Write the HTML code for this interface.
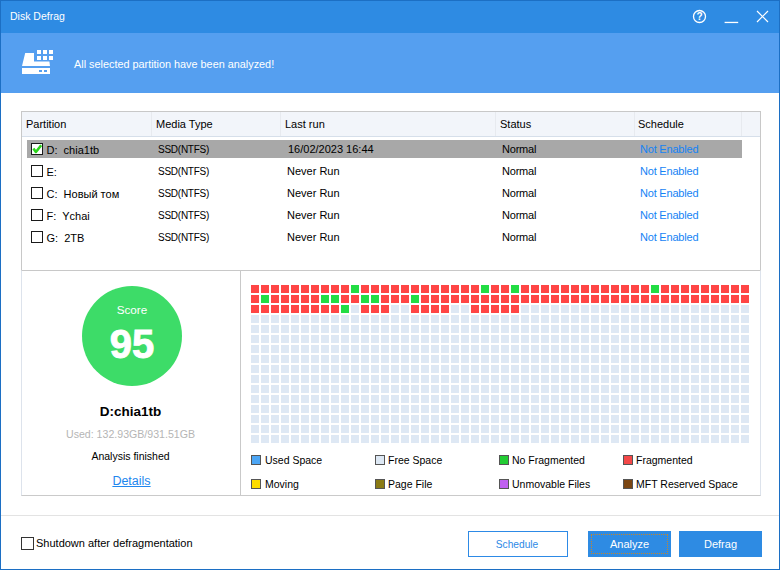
<!DOCTYPE html>
<html><head><meta charset="utf-8"><style>
html,body{margin:0;padding:0;}
body{width:780px;height:570px;position:relative;overflow:hidden;background:#fff;font-family:"Liberation Sans",sans-serif;color:#000;}
.a{position:absolute;white-space:nowrap;}
#win{position:absolute;left:0;top:0;width:778px;height:568px;border:1px solid #1c6fc4;}
#title{position:absolute;left:1px;top:1px;width:778px;height:32px;background:#2e8be3;}
#hdr{position:absolute;left:1px;top:33px;width:778px;height:60px;background:#559ff0;}
.wt{color:#fff;}
.t11{font-size:11px;}
#tbl{position:absolute;left:21px;top:111px;width:738px;height:158px;border:1px solid #c8c8c8;}
#thead{position:absolute;left:22px;top:112px;width:738px;height:24px;background:#f2f5fa;border-bottom:1px solid #d6dfea;}
.sep{position:absolute;top:112px;width:1px;height:24px;background:#e7eaef;}
.sel{position:absolute;left:27px;top:140px;width:715px;height:18px;background:#a8a8a8;}
.cb{position:absolute;width:10px;height:10px;border:1px solid #1a1a1a;background:#fff;}
.lnk{color:#1583f5;}
#panel{position:absolute;left:21px;top:270px;width:738px;height:224px;border:1px solid #dde3ec;border-top-color:#c8c8c8;border-bottom-color:#cacaca;}
#pdiv{position:absolute;left:240px;top:270px;width:1px;height:225px;background:#c9c9c9;}
#circ{position:absolute;left:82px;top:286px;width:100px;height:100px;border-radius:50%;background:#3ddc68;}
i{position:absolute;width:8px;height:8px;display:block;}
i.r{background:#ff4545;}
i.g{background:#22dd44;}
i.f{background:#dee8f4;}
.lg{position:absolute;width:8px;height:8px;border:1px solid #555;}
#bsep{position:absolute;left:1px;top:515px;width:778px;height:1px;background:#e3e3e3;}
.btn{position:absolute;top:531px;height:26px;box-sizing:border-box;text-align:center;font-size:11px;line-height:26px;}

</style></head><body>
<div id="win"></div>
<div id="title"></div>
<div class="a wt" style="left:10px;top:10px;font-size:10.5px;">Disk Defrag</div>
<svg class="a" style="left:690px;top:7px" width="80" height="20" viewBox="0 0 80 20">
  <circle cx="9.5" cy="9.5" r="6" fill="none" stroke="#fff" stroke-width="1.3"/>
  <text x="9.6" y="13.3" font-family="Liberation Sans" font-size="10" font-weight="bold" fill="#fff" text-anchor="middle">?</text>
  <rect x="34.6" y="14.8" width="13.6" height="1.3" fill="#fff"/>
  <path d="M67 4 L78 15 M78 4 L67 15" stroke="#fff" stroke-width="1.2"/>
</svg>
<div id="hdr"></div>
<svg class="a" style="left:20px;top:48px" width="36" height="30" viewBox="20 48 36 30">
  <path d="M22 66 L25.2 53 L34 53 L34 61.5 L49.4 61.5 L50 66 Z" fill="#fff"/>
  <rect x="22" y="68" width="28" height="6" fill="#fff"/>
  <rect x="39" y="70" width="3" height="2" fill="#559ff0"/>
  <rect x="44" y="70" width="3" height="2" fill="#559ff0"/>
  <rect x="37" y="50" width="4" height="4" fill="#fff"/>
  <rect x="43" y="50" width="4" height="4" fill="#fff"/>
  <rect x="49" y="50" width="4" height="4" fill="#fff"/>
  <rect x="37" y="56" width="4" height="4" fill="#fff"/>
  <rect x="43" y="56" width="4" height="4" fill="#fff"/>
  <rect x="49" y="56" width="4" height="4" fill="#fff"/>
</svg>
<div class="a wt" style="left:74px;top:58px;font-size:10.85px;">All selected partition have been analyzed!</div>

<div id="tbl"></div>
<div id="thead"></div>
<div class="sep" style="left:151px"></div>
<div class="sep" style="left:280px"></div>
<div class="sep" style="left:495px"></div>
<div class="sep" style="left:634px"></div>
<div class="sep" style="left:741px"></div>
<div class="a t11" style="left:26px;top:118px;">Partition</div>
<div class="a t11" style="left:156px;top:118px;">Media Type</div>
<div class="a t11" style="left:285px;top:118px;">Last run</div>
<div class="a t11" style="left:500px;top:118px;">Status</div>
<div class="a t11" style="left:638px;top:118px;">Schedule</div>

<div class="sel"></div>
<div class="cb" style="left:31px;top:143px;"></div>
<svg class="a" style="left:31px;top:143px" width="12" height="12" viewBox="0 0 12 12"><path d="M2.4 5.6 L4.9 9 L10.2 2.2" fill="none" stroke="#2cd41c" stroke-width="2.6" stroke-linejoin="round"/></svg>
<div class="a t11" style="left:46.5px;top:144px;">D:&nbsp; chia1tb</div>
<div class="a t11" style="left:158px;top:143px;"><span style="font-size:10px;letter-spacing:-0.25px">SSD(NTFS)</span></div>
<div class="a t11" style="left:288px;top:143px;">16/02/2023 16:44</div>
<div class="a t11" style="left:502px;top:143px;letter-spacing:-0.2px;">Normal</div>
<div class="a t11 lnk" style="left:640px;top:143px;letter-spacing:-0.2px;">Not Enabled</div>

<div class="cb" style="left:31px;top:165px;"></div>
<div class="a t11" style="left:46.5px;top:166px;">E:</div>
<div class="a t11" style="left:158px;top:165px;"><span style="font-size:10px;letter-spacing:-0.25px">SSD(NTFS)</span></div>
<div class="a t11" style="left:287px;top:165px;">Never Run</div>
<div class="a t11" style="left:502px;top:165px;letter-spacing:-0.2px;">Normal</div>
<div class="a t11 lnk" style="left:640px;top:165px;letter-spacing:-0.2px;">Not Enabled</div>

<div class="cb" style="left:31px;top:187px;"></div>
<div class="a t11" style="left:46.5px;top:188px;">C:&nbsp; Новый том</div>
<div class="a t11" style="left:158px;top:187px;"><span style="font-size:10px;letter-spacing:-0.25px">SSD(NTFS)</span></div>
<div class="a t11" style="left:287px;top:187px;">Never Run</div>
<div class="a t11" style="left:502px;top:187px;letter-spacing:-0.2px;">Normal</div>
<div class="a t11 lnk" style="left:640px;top:187px;letter-spacing:-0.2px;">Not Enabled</div>

<div class="cb" style="left:31px;top:209px;"></div>
<div class="a t11" style="left:46.5px;top:210px;">F:&nbsp; Ychai</div>
<div class="a t11" style="left:158px;top:209px;"><span style="font-size:10px;letter-spacing:-0.25px">SSD(NTFS)</span></div>
<div class="a t11" style="left:287px;top:209px;">Never Run</div>
<div class="a t11" style="left:502px;top:209px;letter-spacing:-0.2px;">Normal</div>
<div class="a t11 lnk" style="left:640px;top:209px;letter-spacing:-0.2px;">Not Enabled</div>

<div class="cb" style="left:31px;top:231px;"></div>
<div class="a t11" style="left:46.5px;top:232px;">G:&nbsp; 2TB</div>
<div class="a t11" style="left:158px;top:231px;"><span style="font-size:10px;letter-spacing:-0.25px">SSD(NTFS)</span></div>
<div class="a t11" style="left:287px;top:231px;">Never Run</div>
<div class="a t11" style="left:502px;top:231px;letter-spacing:-0.2px;">Normal</div>
<div class="a t11 lnk" style="left:640px;top:231px;letter-spacing:-0.2px;">Not Enabled</div>

<div id="panel"></div>
<div id="pdiv"></div>
<div id="circ"></div>
<div class="a wt" style="left:82px;width:100px;text-align:center;top:303px;font-size:11.7px;">Score</div>
<div class="a wt" style="left:82px;width:100px;text-align:center;top:322px;font-size:40px;font-weight:bold;-webkit-text-stroke:0.9px #fff;">95</div>
<div class="a" style="left:21px;width:219px;text-align:center;top:404px;font-size:13.5px;font-weight:bold;">D:chia1tb</div>
<div class="a" style="left:21px;width:219px;text-align:center;top:428px;font-size:10.6px;color:#b5b5b5;">Used: 132.93GB/931.51GB</div>
<div class="a" style="left:21px;width:219px;text-align:center;top:450px;font-size:10.5px;">Analysis finished</div>
<div class="a" style="left:22px;width:219px;text-align:center;top:474px;font-size:12.5px;text-decoration:underline;color:#2186ee;">Details</div>

<i class="r" style="left:251px;top:285px"></i><i class="r" style="left:261px;top:285px"></i><i class="r" style="left:271px;top:285px"></i><i class="r" style="left:281px;top:285px"></i><i class="r" style="left:291px;top:285px"></i><i class="r" style="left:301px;top:285px"></i><i class="r" style="left:311px;top:285px"></i><i class="r" style="left:321px;top:285px"></i><i class="r" style="left:331px;top:285px"></i><i class="r" style="left:341px;top:285px"></i><i class="g" style="left:351px;top:285px"></i><i class="r" style="left:361px;top:285px"></i><i class="r" style="left:371px;top:285px"></i><i class="r" style="left:381px;top:285px"></i><i class="r" style="left:391px;top:285px"></i><i class="r" style="left:401px;top:285px"></i><i class="r" style="left:411px;top:285px"></i><i class="r" style="left:421px;top:285px"></i><i class="r" style="left:431px;top:285px"></i><i class="r" style="left:441px;top:285px"></i><i class="r" style="left:451px;top:285px"></i><i class="r" style="left:461px;top:285px"></i><i class="r" style="left:471px;top:285px"></i><i class="g" style="left:481px;top:285px"></i><i class="r" style="left:491px;top:285px"></i><i class="r" style="left:501px;top:285px"></i><i class="g" style="left:511px;top:285px"></i><i class="r" style="left:521px;top:285px"></i><i class="r" style="left:531px;top:285px"></i><i class="r" style="left:541px;top:285px"></i><i class="r" style="left:551px;top:285px"></i><i class="r" style="left:561px;top:285px"></i><i class="r" style="left:571px;top:285px"></i><i class="r" style="left:581px;top:285px"></i><i class="r" style="left:591px;top:285px"></i><i class="r" style="left:601px;top:285px"></i><i class="r" style="left:611px;top:285px"></i><i class="r" style="left:621px;top:285px"></i><i class="r" style="left:631px;top:285px"></i><i class="r" style="left:641px;top:285px"></i><i class="g" style="left:651px;top:285px"></i><i class="r" style="left:661px;top:285px"></i><i class="r" style="left:671px;top:285px"></i><i class="r" style="left:681px;top:285px"></i><i class="r" style="left:691px;top:285px"></i><i class="r" style="left:701px;top:285px"></i><i class="r" style="left:711px;top:285px"></i><i class="r" style="left:721px;top:285px"></i><i class="r" style="left:731px;top:285px"></i><i class="r" style="left:741px;top:285px"></i><i class="r" style="left:251px;top:295px"></i><i class="g" style="left:261px;top:295px"></i><i class="r" style="left:271px;top:295px"></i><i class="r" style="left:281px;top:295px"></i><i class="r" style="left:291px;top:295px"></i><i class="r" style="left:301px;top:295px"></i><i class="r" style="left:311px;top:295px"></i><i class="g" style="left:321px;top:295px"></i><i class="g" style="left:331px;top:295px"></i><i class="r" style="left:341px;top:295px"></i><i class="r" style="left:351px;top:295px"></i><i class="g" style="left:361px;top:295px"></i><i class="g" style="left:371px;top:295px"></i><i class="r" style="left:381px;top:295px"></i><i class="r" style="left:391px;top:295px"></i><i class="r" style="left:401px;top:295px"></i><i class="g" style="left:411px;top:295px"></i><i class="r" style="left:421px;top:295px"></i><i class="r" style="left:431px;top:295px"></i><i class="r" style="left:441px;top:295px"></i><i class="r" style="left:451px;top:295px"></i><i class="r" style="left:461px;top:295px"></i><i class="r" style="left:471px;top:295px"></i><i class="r" style="left:481px;top:295px"></i><i class="r" style="left:491px;top:295px"></i><i class="r" style="left:501px;top:295px"></i><i class="r" style="left:511px;top:295px"></i><i class="r" style="left:521px;top:295px"></i><i class="r" style="left:531px;top:295px"></i><i class="r" style="left:541px;top:295px"></i><i class="r" style="left:551px;top:295px"></i><i class="r" style="left:561px;top:295px"></i><i class="r" style="left:571px;top:295px"></i><i class="r" style="left:581px;top:295px"></i><i class="r" style="left:591px;top:295px"></i><i class="r" style="left:601px;top:295px"></i><i class="r" style="left:611px;top:295px"></i><i class="r" style="left:621px;top:295px"></i><i class="r" style="left:631px;top:295px"></i><i class="r" style="left:641px;top:295px"></i><i class="r" style="left:651px;top:295px"></i><i class="r" style="left:661px;top:295px"></i><i class="r" style="left:671px;top:295px"></i><i class="r" style="left:681px;top:295px"></i><i class="r" style="left:691px;top:295px"></i><i class="r" style="left:701px;top:295px"></i><i class="r" style="left:711px;top:295px"></i><i class="r" style="left:721px;top:295px"></i><i class="r" style="left:731px;top:295px"></i><i class="r" style="left:741px;top:295px"></i><i class="r" style="left:251px;top:305px"></i><i class="r" style="left:261px;top:305px"></i><i class="r" style="left:271px;top:305px"></i><i class="r" style="left:281px;top:305px"></i><i class="r" style="left:291px;top:305px"></i><i class="r" style="left:301px;top:305px"></i><i class="r" style="left:311px;top:305px"></i><i class="r" style="left:321px;top:305px"></i><i class="r" style="left:331px;top:305px"></i><i class="g" style="left:341px;top:305px"></i><i class="f" style="left:351px;top:305px"></i><i class="r" style="left:361px;top:305px"></i><i class="r" style="left:371px;top:305px"></i><i class="r" style="left:381px;top:305px"></i><i class="f" style="left:391px;top:305px"></i><i class="f" style="left:401px;top:305px"></i><i class="r" style="left:411px;top:305px"></i><i class="r" style="left:421px;top:305px"></i><i class="r" style="left:431px;top:305px"></i><i class="r" style="left:441px;top:305px"></i><i class="f" style="left:451px;top:305px"></i><i class="f" style="left:461px;top:305px"></i><i class="r" style="left:471px;top:305px"></i><i class="r" style="left:481px;top:305px"></i><i class="r" style="left:491px;top:305px"></i><i class="r" style="left:501px;top:305px"></i><i class="r" style="left:511px;top:305px"></i><i class="f" style="left:521px;top:305px"></i><i class="f" style="left:531px;top:305px"></i><i class="f" style="left:541px;top:305px"></i><i class="f" style="left:551px;top:305px"></i><i class="f" style="left:561px;top:305px"></i><i class="f" style="left:571px;top:305px"></i><i class="f" style="left:581px;top:305px"></i><i class="f" style="left:591px;top:305px"></i><i class="f" style="left:601px;top:305px"></i><i class="f" style="left:611px;top:305px"></i><i class="f" style="left:621px;top:305px"></i><i class="f" style="left:631px;top:305px"></i><i class="f" style="left:641px;top:305px"></i><i class="f" style="left:651px;top:305px"></i><i class="f" style="left:661px;top:305px"></i><i class="f" style="left:671px;top:305px"></i><i class="f" style="left:681px;top:305px"></i><i class="f" style="left:691px;top:305px"></i><i class="f" style="left:701px;top:305px"></i><i class="f" style="left:711px;top:305px"></i><i class="f" style="left:721px;top:305px"></i><i class="f" style="left:731px;top:305px"></i><i class="f" style="left:741px;top:305px"></i><i class="f" style="left:251px;top:315px"></i><i class="f" style="left:261px;top:315px"></i><i class="f" style="left:271px;top:315px"></i><i class="f" style="left:281px;top:315px"></i><i class="f" style="left:291px;top:315px"></i><i class="f" style="left:301px;top:315px"></i><i class="f" style="left:311px;top:315px"></i><i class="f" style="left:321px;top:315px"></i><i class="f" style="left:331px;top:315px"></i><i class="f" style="left:341px;top:315px"></i><i class="f" style="left:351px;top:315px"></i><i class="f" style="left:361px;top:315px"></i><i class="f" style="left:371px;top:315px"></i><i class="f" style="left:381px;top:315px"></i><i class="f" style="left:391px;top:315px"></i><i class="f" style="left:401px;top:315px"></i><i class="f" style="left:411px;top:315px"></i><i class="f" style="left:421px;top:315px"></i><i class="f" style="left:431px;top:315px"></i><i class="f" style="left:441px;top:315px"></i><i class="f" style="left:451px;top:315px"></i><i class="f" style="left:461px;top:315px"></i><i class="f" style="left:471px;top:315px"></i><i class="f" style="left:481px;top:315px"></i><i class="f" style="left:491px;top:315px"></i><i class="f" style="left:501px;top:315px"></i><i class="f" style="left:511px;top:315px"></i><i class="f" style="left:521px;top:315px"></i><i class="f" style="left:531px;top:315px"></i><i class="f" style="left:541px;top:315px"></i><i class="f" style="left:551px;top:315px"></i><i class="f" style="left:561px;top:315px"></i><i class="f" style="left:571px;top:315px"></i><i class="f" style="left:581px;top:315px"></i><i class="f" style="left:591px;top:315px"></i><i class="f" style="left:601px;top:315px"></i><i class="f" style="left:611px;top:315px"></i><i class="f" style="left:621px;top:315px"></i><i class="f" style="left:631px;top:315px"></i><i class="f" style="left:641px;top:315px"></i><i class="f" style="left:651px;top:315px"></i><i class="f" style="left:661px;top:315px"></i><i class="f" style="left:671px;top:315px"></i><i class="f" style="left:681px;top:315px"></i><i class="f" style="left:691px;top:315px"></i><i class="f" style="left:701px;top:315px"></i><i class="f" style="left:711px;top:315px"></i><i class="f" style="left:721px;top:315px"></i><i class="f" style="left:731px;top:315px"></i><i class="f" style="left:741px;top:315px"></i><i class="f" style="left:251px;top:325px"></i><i class="f" style="left:261px;top:325px"></i><i class="f" style="left:271px;top:325px"></i><i class="f" style="left:281px;top:325px"></i><i class="f" style="left:291px;top:325px"></i><i class="f" style="left:301px;top:325px"></i><i class="f" style="left:311px;top:325px"></i><i class="f" style="left:321px;top:325px"></i><i class="f" style="left:331px;top:325px"></i><i class="f" style="left:341px;top:325px"></i><i class="f" style="left:351px;top:325px"></i><i class="f" style="left:361px;top:325px"></i><i class="f" style="left:371px;top:325px"></i><i class="f" style="left:381px;top:325px"></i><i class="f" style="left:391px;top:325px"></i><i class="f" style="left:401px;top:325px"></i><i class="f" style="left:411px;top:325px"></i><i class="f" style="left:421px;top:325px"></i><i class="f" style="left:431px;top:325px"></i><i class="f" style="left:441px;top:325px"></i><i class="f" style="left:451px;top:325px"></i><i class="f" style="left:461px;top:325px"></i><i class="f" style="left:471px;top:325px"></i><i class="f" style="left:481px;top:325px"></i><i class="f" style="left:491px;top:325px"></i><i class="f" style="left:501px;top:325px"></i><i class="f" style="left:511px;top:325px"></i><i class="f" style="left:521px;top:325px"></i><i class="f" style="left:531px;top:325px"></i><i class="f" style="left:541px;top:325px"></i><i class="f" style="left:551px;top:325px"></i><i class="f" style="left:561px;top:325px"></i><i class="f" style="left:571px;top:325px"></i><i class="f" style="left:581px;top:325px"></i><i class="f" style="left:591px;top:325px"></i><i class="f" style="left:601px;top:325px"></i><i class="f" style="left:611px;top:325px"></i><i class="f" style="left:621px;top:325px"></i><i class="f" style="left:631px;top:325px"></i><i class="f" style="left:641px;top:325px"></i><i class="f" style="left:651px;top:325px"></i><i class="f" style="left:661px;top:325px"></i><i class="f" style="left:671px;top:325px"></i><i class="f" style="left:681px;top:325px"></i><i class="f" style="left:691px;top:325px"></i><i class="f" style="left:701px;top:325px"></i><i class="f" style="left:711px;top:325px"></i><i class="f" style="left:721px;top:325px"></i><i class="f" style="left:731px;top:325px"></i><i class="f" style="left:741px;top:325px"></i><i class="f" style="left:251px;top:335px"></i><i class="f" style="left:261px;top:335px"></i><i class="f" style="left:271px;top:335px"></i><i class="f" style="left:281px;top:335px"></i><i class="f" style="left:291px;top:335px"></i><i class="f" style="left:301px;top:335px"></i><i class="f" style="left:311px;top:335px"></i><i class="f" style="left:321px;top:335px"></i><i class="f" style="left:331px;top:335px"></i><i class="f" style="left:341px;top:335px"></i><i class="f" style="left:351px;top:335px"></i><i class="f" style="left:361px;top:335px"></i><i class="f" style="left:371px;top:335px"></i><i class="f" style="left:381px;top:335px"></i><i class="f" style="left:391px;top:335px"></i><i class="f" style="left:401px;top:335px"></i><i class="f" style="left:411px;top:335px"></i><i class="f" style="left:421px;top:335px"></i><i class="f" style="left:431px;top:335px"></i><i class="f" style="left:441px;top:335px"></i><i class="f" style="left:451px;top:335px"></i><i class="f" style="left:461px;top:335px"></i><i class="f" style="left:471px;top:335px"></i><i class="f" style="left:481px;top:335px"></i><i class="f" style="left:491px;top:335px"></i><i class="f" style="left:501px;top:335px"></i><i class="f" style="left:511px;top:335px"></i><i class="f" style="left:521px;top:335px"></i><i class="f" style="left:531px;top:335px"></i><i class="f" style="left:541px;top:335px"></i><i class="f" style="left:551px;top:335px"></i><i class="f" style="left:561px;top:335px"></i><i class="f" style="left:571px;top:335px"></i><i class="f" style="left:581px;top:335px"></i><i class="f" style="left:591px;top:335px"></i><i class="f" style="left:601px;top:335px"></i><i class="f" style="left:611px;top:335px"></i><i class="f" style="left:621px;top:335px"></i><i class="f" style="left:631px;top:335px"></i><i class="f" style="left:641px;top:335px"></i><i class="f" style="left:651px;top:335px"></i><i class="f" style="left:661px;top:335px"></i><i class="f" style="left:671px;top:335px"></i><i class="f" style="left:681px;top:335px"></i><i class="f" style="left:691px;top:335px"></i><i class="f" style="left:701px;top:335px"></i><i class="f" style="left:711px;top:335px"></i><i class="f" style="left:721px;top:335px"></i><i class="f" style="left:731px;top:335px"></i><i class="f" style="left:741px;top:335px"></i><i class="f" style="left:251px;top:345px"></i><i class="f" style="left:261px;top:345px"></i><i class="f" style="left:271px;top:345px"></i><i class="f" style="left:281px;top:345px"></i><i class="f" style="left:291px;top:345px"></i><i class="f" style="left:301px;top:345px"></i><i class="f" style="left:311px;top:345px"></i><i class="f" style="left:321px;top:345px"></i><i class="f" style="left:331px;top:345px"></i><i class="f" style="left:341px;top:345px"></i><i class="f" style="left:351px;top:345px"></i><i class="f" style="left:361px;top:345px"></i><i class="f" style="left:371px;top:345px"></i><i class="f" style="left:381px;top:345px"></i><i class="f" style="left:391px;top:345px"></i><i class="f" style="left:401px;top:345px"></i><i class="f" style="left:411px;top:345px"></i><i class="f" style="left:421px;top:345px"></i><i class="f" style="left:431px;top:345px"></i><i class="f" style="left:441px;top:345px"></i><i class="f" style="left:451px;top:345px"></i><i class="f" style="left:461px;top:345px"></i><i class="f" style="left:471px;top:345px"></i><i class="f" style="left:481px;top:345px"></i><i class="f" style="left:491px;top:345px"></i><i class="f" style="left:501px;top:345px"></i><i class="f" style="left:511px;top:345px"></i><i class="f" style="left:521px;top:345px"></i><i class="f" style="left:531px;top:345px"></i><i class="f" style="left:541px;top:345px"></i><i class="f" style="left:551px;top:345px"></i><i class="f" style="left:561px;top:345px"></i><i class="f" style="left:571px;top:345px"></i><i class="f" style="left:581px;top:345px"></i><i class="f" style="left:591px;top:345px"></i><i class="f" style="left:601px;top:345px"></i><i class="f" style="left:611px;top:345px"></i><i class="f" style="left:621px;top:345px"></i><i class="f" style="left:631px;top:345px"></i><i class="f" style="left:641px;top:345px"></i><i class="f" style="left:651px;top:345px"></i><i class="f" style="left:661px;top:345px"></i><i class="f" style="left:671px;top:345px"></i><i class="f" style="left:681px;top:345px"></i><i class="f" style="left:691px;top:345px"></i><i class="f" style="left:701px;top:345px"></i><i class="f" style="left:711px;top:345px"></i><i class="f" style="left:721px;top:345px"></i><i class="f" style="left:731px;top:345px"></i><i class="f" style="left:741px;top:345px"></i><i class="f" style="left:251px;top:355px"></i><i class="f" style="left:261px;top:355px"></i><i class="f" style="left:271px;top:355px"></i><i class="f" style="left:281px;top:355px"></i><i class="f" style="left:291px;top:355px"></i><i class="f" style="left:301px;top:355px"></i><i class="f" style="left:311px;top:355px"></i><i class="f" style="left:321px;top:355px"></i><i class="f" style="left:331px;top:355px"></i><i class="f" style="left:341px;top:355px"></i><i class="f" style="left:351px;top:355px"></i><i class="f" style="left:361px;top:355px"></i><i class="f" style="left:371px;top:355px"></i><i class="f" style="left:381px;top:355px"></i><i class="f" style="left:391px;top:355px"></i><i class="f" style="left:401px;top:355px"></i><i class="f" style="left:411px;top:355px"></i><i class="f" style="left:421px;top:355px"></i><i class="f" style="left:431px;top:355px"></i><i class="f" style="left:441px;top:355px"></i><i class="f" style="left:451px;top:355px"></i><i class="f" style="left:461px;top:355px"></i><i class="f" style="left:471px;top:355px"></i><i class="f" style="left:481px;top:355px"></i><i class="f" style="left:491px;top:355px"></i><i class="f" style="left:501px;top:355px"></i><i class="f" style="left:511px;top:355px"></i><i class="f" style="left:521px;top:355px"></i><i class="f" style="left:531px;top:355px"></i><i class="f" style="left:541px;top:355px"></i><i class="f" style="left:551px;top:355px"></i><i class="f" style="left:561px;top:355px"></i><i class="f" style="left:571px;top:355px"></i><i class="f" style="left:581px;top:355px"></i><i class="f" style="left:591px;top:355px"></i><i class="f" style="left:601px;top:355px"></i><i class="f" style="left:611px;top:355px"></i><i class="f" style="left:621px;top:355px"></i><i class="f" style="left:631px;top:355px"></i><i class="f" style="left:641px;top:355px"></i><i class="f" style="left:651px;top:355px"></i><i class="f" style="left:661px;top:355px"></i><i class="f" style="left:671px;top:355px"></i><i class="f" style="left:681px;top:355px"></i><i class="f" style="left:691px;top:355px"></i><i class="f" style="left:701px;top:355px"></i><i class="f" style="left:711px;top:355px"></i><i class="f" style="left:721px;top:355px"></i><i class="f" style="left:731px;top:355px"></i><i class="f" style="left:741px;top:355px"></i><i class="f" style="left:251px;top:365px"></i><i class="f" style="left:261px;top:365px"></i><i class="f" style="left:271px;top:365px"></i><i class="f" style="left:281px;top:365px"></i><i class="f" style="left:291px;top:365px"></i><i class="f" style="left:301px;top:365px"></i><i class="f" style="left:311px;top:365px"></i><i class="f" style="left:321px;top:365px"></i><i class="f" style="left:331px;top:365px"></i><i class="f" style="left:341px;top:365px"></i><i class="f" style="left:351px;top:365px"></i><i class="f" style="left:361px;top:365px"></i><i class="f" style="left:371px;top:365px"></i><i class="f" style="left:381px;top:365px"></i><i class="f" style="left:391px;top:365px"></i><i class="f" style="left:401px;top:365px"></i><i class="f" style="left:411px;top:365px"></i><i class="f" style="left:421px;top:365px"></i><i class="f" style="left:431px;top:365px"></i><i class="f" style="left:441px;top:365px"></i><i class="f" style="left:451px;top:365px"></i><i class="f" style="left:461px;top:365px"></i><i class="f" style="left:471px;top:365px"></i><i class="f" style="left:481px;top:365px"></i><i class="f" style="left:491px;top:365px"></i><i class="f" style="left:501px;top:365px"></i><i class="f" style="left:511px;top:365px"></i><i class="f" style="left:521px;top:365px"></i><i class="f" style="left:531px;top:365px"></i><i class="f" style="left:541px;top:365px"></i><i class="f" style="left:551px;top:365px"></i><i class="f" style="left:561px;top:365px"></i><i class="f" style="left:571px;top:365px"></i><i class="f" style="left:581px;top:365px"></i><i class="f" style="left:591px;top:365px"></i><i class="f" style="left:601px;top:365px"></i><i class="f" style="left:611px;top:365px"></i><i class="f" style="left:621px;top:365px"></i><i class="f" style="left:631px;top:365px"></i><i class="f" style="left:641px;top:365px"></i><i class="f" style="left:651px;top:365px"></i><i class="f" style="left:661px;top:365px"></i><i class="f" style="left:671px;top:365px"></i><i class="f" style="left:681px;top:365px"></i><i class="f" style="left:691px;top:365px"></i><i class="f" style="left:701px;top:365px"></i><i class="f" style="left:711px;top:365px"></i><i class="f" style="left:721px;top:365px"></i><i class="f" style="left:731px;top:365px"></i><i class="f" style="left:741px;top:365px"></i><i class="f" style="left:251px;top:375px"></i><i class="f" style="left:261px;top:375px"></i><i class="f" style="left:271px;top:375px"></i><i class="f" style="left:281px;top:375px"></i><i class="f" style="left:291px;top:375px"></i><i class="f" style="left:301px;top:375px"></i><i class="f" style="left:311px;top:375px"></i><i class="f" style="left:321px;top:375px"></i><i class="f" style="left:331px;top:375px"></i><i class="f" style="left:341px;top:375px"></i><i class="f" style="left:351px;top:375px"></i><i class="f" style="left:361px;top:375px"></i><i class="f" style="left:371px;top:375px"></i><i class="f" style="left:381px;top:375px"></i><i class="f" style="left:391px;top:375px"></i><i class="f" style="left:401px;top:375px"></i><i class="f" style="left:411px;top:375px"></i><i class="f" style="left:421px;top:375px"></i><i class="f" style="left:431px;top:375px"></i><i class="f" style="left:441px;top:375px"></i><i class="f" style="left:451px;top:375px"></i><i class="f" style="left:461px;top:375px"></i><i class="f" style="left:471px;top:375px"></i><i class="f" style="left:481px;top:375px"></i><i class="f" style="left:491px;top:375px"></i><i class="f" style="left:501px;top:375px"></i><i class="f" style="left:511px;top:375px"></i><i class="f" style="left:521px;top:375px"></i><i class="f" style="left:531px;top:375px"></i><i class="f" style="left:541px;top:375px"></i><i class="f" style="left:551px;top:375px"></i><i class="f" style="left:561px;top:375px"></i><i class="f" style="left:571px;top:375px"></i><i class="f" style="left:581px;top:375px"></i><i class="f" style="left:591px;top:375px"></i><i class="f" style="left:601px;top:375px"></i><i class="f" style="left:611px;top:375px"></i><i class="f" style="left:621px;top:375px"></i><i class="f" style="left:631px;top:375px"></i><i class="f" style="left:641px;top:375px"></i><i class="f" style="left:651px;top:375px"></i><i class="f" style="left:661px;top:375px"></i><i class="f" style="left:671px;top:375px"></i><i class="f" style="left:681px;top:375px"></i><i class="f" style="left:691px;top:375px"></i><i class="f" style="left:701px;top:375px"></i><i class="f" style="left:711px;top:375px"></i><i class="f" style="left:721px;top:375px"></i><i class="f" style="left:731px;top:375px"></i><i class="f" style="left:741px;top:375px"></i><i class="f" style="left:251px;top:385px"></i><i class="f" style="left:261px;top:385px"></i><i class="f" style="left:271px;top:385px"></i><i class="f" style="left:281px;top:385px"></i><i class="f" style="left:291px;top:385px"></i><i class="f" style="left:301px;top:385px"></i><i class="f" style="left:311px;top:385px"></i><i class="f" style="left:321px;top:385px"></i><i class="f" style="left:331px;top:385px"></i><i class="f" style="left:341px;top:385px"></i><i class="f" style="left:351px;top:385px"></i><i class="f" style="left:361px;top:385px"></i><i class="f" style="left:371px;top:385px"></i><i class="f" style="left:381px;top:385px"></i><i class="f" style="left:391px;top:385px"></i><i class="f" style="left:401px;top:385px"></i><i class="f" style="left:411px;top:385px"></i><i class="f" style="left:421px;top:385px"></i><i class="f" style="left:431px;top:385px"></i><i class="f" style="left:441px;top:385px"></i><i class="f" style="left:451px;top:385px"></i><i class="f" style="left:461px;top:385px"></i><i class="f" style="left:471px;top:385px"></i><i class="f" style="left:481px;top:385px"></i><i class="f" style="left:491px;top:385px"></i><i class="f" style="left:501px;top:385px"></i><i class="f" style="left:511px;top:385px"></i><i class="f" style="left:521px;top:385px"></i><i class="f" style="left:531px;top:385px"></i><i class="f" style="left:541px;top:385px"></i><i class="f" style="left:551px;top:385px"></i><i class="f" style="left:561px;top:385px"></i><i class="f" style="left:571px;top:385px"></i><i class="f" style="left:581px;top:385px"></i><i class="f" style="left:591px;top:385px"></i><i class="f" style="left:601px;top:385px"></i><i class="f" style="left:611px;top:385px"></i><i class="f" style="left:621px;top:385px"></i><i class="f" style="left:631px;top:385px"></i><i class="f" style="left:641px;top:385px"></i><i class="f" style="left:651px;top:385px"></i><i class="f" style="left:661px;top:385px"></i><i class="f" style="left:671px;top:385px"></i><i class="f" style="left:681px;top:385px"></i><i class="f" style="left:691px;top:385px"></i><i class="f" style="left:701px;top:385px"></i><i class="f" style="left:711px;top:385px"></i><i class="f" style="left:721px;top:385px"></i><i class="f" style="left:731px;top:385px"></i><i class="f" style="left:741px;top:385px"></i><i class="f" style="left:251px;top:395px"></i><i class="f" style="left:261px;top:395px"></i><i class="f" style="left:271px;top:395px"></i><i class="f" style="left:281px;top:395px"></i><i class="f" style="left:291px;top:395px"></i><i class="f" style="left:301px;top:395px"></i><i class="f" style="left:311px;top:395px"></i><i class="f" style="left:321px;top:395px"></i><i class="f" style="left:331px;top:395px"></i><i class="f" style="left:341px;top:395px"></i><i class="f" style="left:351px;top:395px"></i><i class="f" style="left:361px;top:395px"></i><i class="f" style="left:371px;top:395px"></i><i class="f" style="left:381px;top:395px"></i><i class="f" style="left:391px;top:395px"></i><i class="f" style="left:401px;top:395px"></i><i class="f" style="left:411px;top:395px"></i><i class="f" style="left:421px;top:395px"></i><i class="f" style="left:431px;top:395px"></i><i class="f" style="left:441px;top:395px"></i><i class="f" style="left:451px;top:395px"></i><i class="f" style="left:461px;top:395px"></i><i class="f" style="left:471px;top:395px"></i><i class="f" style="left:481px;top:395px"></i><i class="f" style="left:491px;top:395px"></i><i class="f" style="left:501px;top:395px"></i><i class="f" style="left:511px;top:395px"></i><i class="f" style="left:521px;top:395px"></i><i class="f" style="left:531px;top:395px"></i><i class="f" style="left:541px;top:395px"></i><i class="f" style="left:551px;top:395px"></i><i class="f" style="left:561px;top:395px"></i><i class="f" style="left:571px;top:395px"></i><i class="f" style="left:581px;top:395px"></i><i class="f" style="left:591px;top:395px"></i><i class="f" style="left:601px;top:395px"></i><i class="f" style="left:611px;top:395px"></i><i class="f" style="left:621px;top:395px"></i><i class="f" style="left:631px;top:395px"></i><i class="f" style="left:641px;top:395px"></i><i class="f" style="left:651px;top:395px"></i><i class="f" style="left:661px;top:395px"></i><i class="f" style="left:671px;top:395px"></i><i class="f" style="left:681px;top:395px"></i><i class="f" style="left:691px;top:395px"></i><i class="f" style="left:701px;top:395px"></i><i class="f" style="left:711px;top:395px"></i><i class="f" style="left:721px;top:395px"></i><i class="f" style="left:731px;top:395px"></i><i class="f" style="left:741px;top:395px"></i><i class="f" style="left:251px;top:405px"></i><i class="f" style="left:261px;top:405px"></i><i class="f" style="left:271px;top:405px"></i><i class="f" style="left:281px;top:405px"></i><i class="f" style="left:291px;top:405px"></i><i class="f" style="left:301px;top:405px"></i><i class="f" style="left:311px;top:405px"></i><i class="f" style="left:321px;top:405px"></i><i class="f" style="left:331px;top:405px"></i><i class="f" style="left:341px;top:405px"></i><i class="f" style="left:351px;top:405px"></i><i class="f" style="left:361px;top:405px"></i><i class="f" style="left:371px;top:405px"></i><i class="f" style="left:381px;top:405px"></i><i class="f" style="left:391px;top:405px"></i><i class="f" style="left:401px;top:405px"></i><i class="f" style="left:411px;top:405px"></i><i class="f" style="left:421px;top:405px"></i><i class="f" style="left:431px;top:405px"></i><i class="f" style="left:441px;top:405px"></i><i class="f" style="left:451px;top:405px"></i><i class="f" style="left:461px;top:405px"></i><i class="f" style="left:471px;top:405px"></i><i class="f" style="left:481px;top:405px"></i><i class="f" style="left:491px;top:405px"></i><i class="f" style="left:501px;top:405px"></i><i class="f" style="left:511px;top:405px"></i><i class="f" style="left:521px;top:405px"></i><i class="f" style="left:531px;top:405px"></i><i class="f" style="left:541px;top:405px"></i><i class="f" style="left:551px;top:405px"></i><i class="f" style="left:561px;top:405px"></i><i class="f" style="left:571px;top:405px"></i><i class="f" style="left:581px;top:405px"></i><i class="f" style="left:591px;top:405px"></i><i class="f" style="left:601px;top:405px"></i><i class="f" style="left:611px;top:405px"></i><i class="f" style="left:621px;top:405px"></i><i class="f" style="left:631px;top:405px"></i><i class="f" style="left:641px;top:405px"></i><i class="f" style="left:651px;top:405px"></i><i class="f" style="left:661px;top:405px"></i><i class="f" style="left:671px;top:405px"></i><i class="f" style="left:681px;top:405px"></i><i class="f" style="left:691px;top:405px"></i><i class="f" style="left:701px;top:405px"></i><i class="f" style="left:711px;top:405px"></i><i class="f" style="left:721px;top:405px"></i><i class="f" style="left:731px;top:405px"></i><i class="f" style="left:741px;top:405px"></i><i class="f" style="left:251px;top:415px"></i><i class="f" style="left:261px;top:415px"></i><i class="f" style="left:271px;top:415px"></i><i class="f" style="left:281px;top:415px"></i><i class="f" style="left:291px;top:415px"></i><i class="f" style="left:301px;top:415px"></i><i class="f" style="left:311px;top:415px"></i><i class="f" style="left:321px;top:415px"></i><i class="f" style="left:331px;top:415px"></i><i class="f" style="left:341px;top:415px"></i><i class="f" style="left:351px;top:415px"></i><i class="f" style="left:361px;top:415px"></i><i class="f" style="left:371px;top:415px"></i><i class="f" style="left:381px;top:415px"></i><i class="f" style="left:391px;top:415px"></i><i class="f" style="left:401px;top:415px"></i><i class="f" style="left:411px;top:415px"></i><i class="f" style="left:421px;top:415px"></i><i class="f" style="left:431px;top:415px"></i><i class="f" style="left:441px;top:415px"></i><i class="f" style="left:451px;top:415px"></i><i class="f" style="left:461px;top:415px"></i><i class="f" style="left:471px;top:415px"></i><i class="f" style="left:481px;top:415px"></i><i class="f" style="left:491px;top:415px"></i><i class="f" style="left:501px;top:415px"></i><i class="f" style="left:511px;top:415px"></i><i class="f" style="left:521px;top:415px"></i><i class="f" style="left:531px;top:415px"></i><i class="f" style="left:541px;top:415px"></i><i class="f" style="left:551px;top:415px"></i><i class="f" style="left:561px;top:415px"></i><i class="f" style="left:571px;top:415px"></i><i class="f" style="left:581px;top:415px"></i><i class="f" style="left:591px;top:415px"></i><i class="f" style="left:601px;top:415px"></i><i class="f" style="left:611px;top:415px"></i><i class="f" style="left:621px;top:415px"></i><i class="f" style="left:631px;top:415px"></i><i class="f" style="left:641px;top:415px"></i><i class="f" style="left:651px;top:415px"></i><i class="f" style="left:661px;top:415px"></i><i class="f" style="left:671px;top:415px"></i><i class="f" style="left:681px;top:415px"></i><i class="f" style="left:691px;top:415px"></i><i class="f" style="left:701px;top:415px"></i><i class="f" style="left:711px;top:415px"></i><i class="f" style="left:721px;top:415px"></i><i class="f" style="left:731px;top:415px"></i><i class="f" style="left:741px;top:415px"></i><i class="f" style="left:251px;top:425px"></i><i class="f" style="left:261px;top:425px"></i><i class="f" style="left:271px;top:425px"></i><i class="f" style="left:281px;top:425px"></i><i class="f" style="left:291px;top:425px"></i><i class="f" style="left:301px;top:425px"></i><i class="f" style="left:311px;top:425px"></i><i class="f" style="left:321px;top:425px"></i><i class="f" style="left:331px;top:425px"></i><i class="f" style="left:341px;top:425px"></i><i class="f" style="left:351px;top:425px"></i><i class="f" style="left:361px;top:425px"></i><i class="f" style="left:371px;top:425px"></i><i class="f" style="left:381px;top:425px"></i><i class="f" style="left:391px;top:425px"></i><i class="f" style="left:401px;top:425px"></i><i class="f" style="left:411px;top:425px"></i><i class="f" style="left:421px;top:425px"></i><i class="f" style="left:431px;top:425px"></i><i class="f" style="left:441px;top:425px"></i><i class="f" style="left:451px;top:425px"></i><i class="f" style="left:461px;top:425px"></i><i class="f" style="left:471px;top:425px"></i><i class="f" style="left:481px;top:425px"></i><i class="f" style="left:491px;top:425px"></i><i class="f" style="left:501px;top:425px"></i><i class="f" style="left:511px;top:425px"></i><i class="f" style="left:521px;top:425px"></i><i class="f" style="left:531px;top:425px"></i><i class="f" style="left:541px;top:425px"></i><i class="f" style="left:551px;top:425px"></i><i class="f" style="left:561px;top:425px"></i><i class="f" style="left:571px;top:425px"></i><i class="f" style="left:581px;top:425px"></i><i class="f" style="left:591px;top:425px"></i><i class="f" style="left:601px;top:425px"></i><i class="f" style="left:611px;top:425px"></i><i class="f" style="left:621px;top:425px"></i><i class="f" style="left:631px;top:425px"></i><i class="f" style="left:641px;top:425px"></i><i class="f" style="left:651px;top:425px"></i><i class="f" style="left:661px;top:425px"></i><i class="f" style="left:671px;top:425px"></i><i class="f" style="left:681px;top:425px"></i><i class="f" style="left:691px;top:425px"></i><i class="f" style="left:701px;top:425px"></i><i class="f" style="left:711px;top:425px"></i><i class="f" style="left:721px;top:425px"></i><i class="f" style="left:731px;top:425px"></i><i class="f" style="left:741px;top:425px"></i><i class="f" style="left:251px;top:435px"></i><i class="f" style="left:261px;top:435px"></i><i class="f" style="left:271px;top:435px"></i><i class="f" style="left:281px;top:435px"></i><i class="f" style="left:291px;top:435px"></i><i class="f" style="left:301px;top:435px"></i><i class="f" style="left:311px;top:435px"></i><i class="f" style="left:321px;top:435px"></i><i class="f" style="left:331px;top:435px"></i><i class="f" style="left:341px;top:435px"></i><i class="f" style="left:351px;top:435px"></i><i class="f" style="left:361px;top:435px"></i><i class="f" style="left:371px;top:435px"></i><i class="f" style="left:381px;top:435px"></i><i class="f" style="left:391px;top:435px"></i><i class="f" style="left:401px;top:435px"></i><i class="f" style="left:411px;top:435px"></i><i class="f" style="left:421px;top:435px"></i><i class="f" style="left:431px;top:435px"></i><i class="f" style="left:441px;top:435px"></i><i class="f" style="left:451px;top:435px"></i><i class="f" style="left:461px;top:435px"></i><i class="f" style="left:471px;top:435px"></i><i class="f" style="left:481px;top:435px"></i><i class="f" style="left:491px;top:435px"></i><i class="f" style="left:501px;top:435px"></i><i class="f" style="left:511px;top:435px"></i><i class="f" style="left:521px;top:435px"></i><i class="f" style="left:531px;top:435px"></i><i class="f" style="left:541px;top:435px"></i><i class="f" style="left:551px;top:435px"></i><i class="f" style="left:561px;top:435px"></i><i class="f" style="left:571px;top:435px"></i><i class="f" style="left:581px;top:435px"></i><i class="f" style="left:591px;top:435px"></i><i class="f" style="left:601px;top:435px"></i><i class="f" style="left:611px;top:435px"></i><i class="f" style="left:621px;top:435px"></i><i class="f" style="left:631px;top:435px"></i><i class="f" style="left:641px;top:435px"></i><i class="f" style="left:651px;top:435px"></i><i class="f" style="left:661px;top:435px"></i><i class="f" style="left:671px;top:435px"></i><i class="f" style="left:681px;top:435px"></i><i class="f" style="left:691px;top:435px"></i><i class="f" style="left:701px;top:435px"></i><i class="f" style="left:711px;top:435px"></i><i class="f" style="left:721px;top:435px"></i><i class="f" style="left:731px;top:435px"></i><i class="f" style="left:741px;top:435px"></i>

<div class="lg" style="left:251px;top:455px;background:#4ca6f5"></div>
<div class="a" style="left:265px;top:454px;font-size:10.5px;">Used Space</div>
<div class="lg" style="left:375px;top:455px;background:#dde8f4"></div>
<div class="a" style="left:388px;top:454px;font-size:10.5px;">Free Space</div>
<div class="lg" style="left:499px;top:455px;background:#22cc33"></div>
<div class="a" style="left:512px;top:454px;font-size:10.5px;">No Fragmented</div>
<div class="lg" style="left:623px;top:455px;background:#f44848"></div>
<div class="a" style="left:636px;top:454px;font-size:10.5px;">Fragmented</div>

<div class="lg" style="left:251px;top:479px;background:#ffdd00"></div>
<div class="a" style="left:265px;top:478px;font-size:10.5px;">Moving</div>
<div class="lg" style="left:375px;top:479px;background:#8a7a14"></div>
<div class="a" style="left:388px;top:478px;font-size:10.5px;">Page File</div>
<div class="lg" style="left:499px;top:479px;background:#c060f0"></div>
<div class="a" style="left:512px;top:478px;font-size:10.5px;">Unmovable Files</div>
<div class="lg" style="left:623px;top:479px;background:#7a4512"></div>
<div class="a" style="left:636px;top:478px;font-size:10.5px;">MFT Reserved Space</div>

<div id="bsep"></div>
<div class="cb" style="left:21px;top:537px;width:11px;height:11px;border-color:#333"></div>
<div class="a t11" style="left:36px;top:537px;">Shutdown after defragmentation</div>
<div class="btn" style="left:468px;width:100px;border:1px solid #2d8ae6;color:#2d8ae6;font-size:10.2px;line-height:25px;text-indent:-2px;">Schedule</div>
<div class="btn" style="left:588px;width:83px;background:#2e8be3;color:#fff;"><div style="position:absolute;left:3px;top:3px;right:3px;bottom:3px;border:1px dotted #c8862a;"></div>Analyze</div>
<div class="btn" style="left:679px;width:83px;background:#2e8be3;color:#fff;">Defrag</div>

</body></html>
